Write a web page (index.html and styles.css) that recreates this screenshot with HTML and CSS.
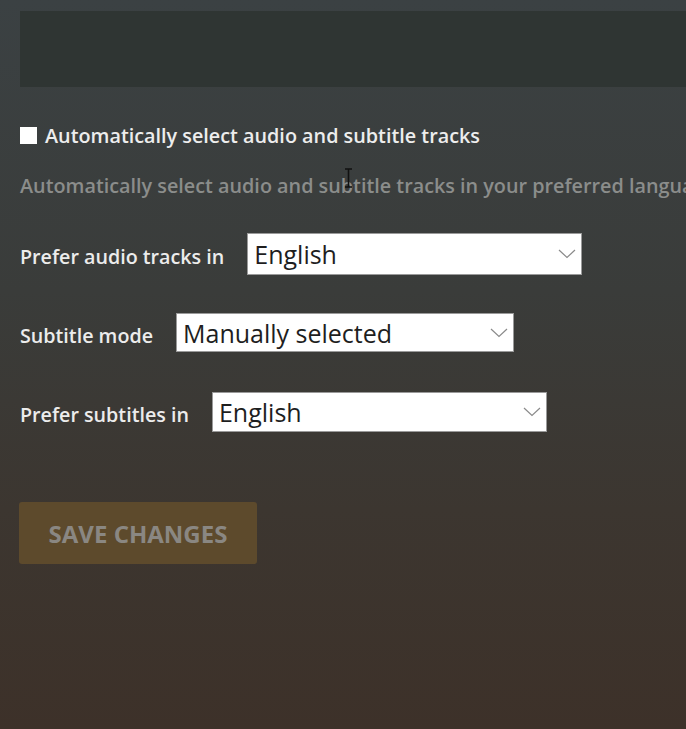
FILE: index.html
```html
<!DOCTYPE html>
<html lang="en">
	<head>
		<meta charset="utf-8">
		<meta name="viewport" content="width=device-width, initial-scale=1.0">
		<title>Playback settings</title>
		<link rel="stylesheet" href="styles.css">
	</head>
	<body>
		<div class="page">
			<div class="topField"></div>

			<label class="checkRow">
				<span class="checkBox"></span>
				<span class="checkText">Automatically select audio and subtitle tracks</span>
			</label>
			<p class="hint">Automatically select audio and subtitle tracks in your preferred language</p>

			<div class="fieldRow rowAudio">
				<span class="fieldLabel">Prefer audio tracks in</span>
				<div class="select">
					<span>English</span>
					<svg class="chev" width="18" height="10" viewBox="0 0 18 10"><path d="M1 1 L9 8.5 L17 1" fill="none" stroke="#8a8a8a" stroke-width="1.2"/></svg>
				</div>
			</div>

			<div class="fieldRow rowMode">
				<span class="fieldLabel">Subtitle mode</span>
				<div class="select">
					<span>Manually selected</span>
					<svg class="chev" width="18" height="10" viewBox="0 0 18 10"><path d="M1 1 L9 8.5 L17 1" fill="none" stroke="#8a8a8a" stroke-width="1.2"/></svg>
				</div>
			</div>

			<div class="fieldRow rowSubs">
				<span class="fieldLabel">Prefer subtitles in</span>
				<div class="select">
					<span>English</span>
					<svg class="chev" width="18" height="10" viewBox="0 0 18 10"><path d="M1 1 L9 8.5 L17 1" fill="none" stroke="#8a8a8a" stroke-width="1.2"/></svg>
				</div>
			</div>

			<button class="saveBtn" disabled>SAVE CHANGES</button>
		</div>
		<!-- text cursor -->
		<svg class="cursor" width="9" height="20" viewBox="0 0 9 20"><path d="M1 1 H8 M4.5 1 V19 M1 19 H8" fill="none" stroke="#111" stroke-width="1.6"/></svg>
	</body>
</html>
```

FILE: styles.css
```css
*{
	margin: 0;
	padding: 0;
	box-sizing: border-box;
}
html,
body{
	height: 100%;
}
body{
	position: relative;
	overflow: hidden;
	font-family: "Open Sans", "Noto Sans", sans-serif;
	background: linear-gradient(180deg, #3b4143 0%, #3a3c3a 40%, #3c3630 70%, #3d3129 100%);
}
.page{
	padding: 11px 0 0 20px;
}
/* dark box on top, runs off the right edge */
.topField{
	width: 720px;
	height: 76px;
	background: #2f3533;
}
.checkRow{
	display: flex;
	align-items: center;
	margin-top: 38px;
	height: 20px;
}
.checkBox{
	width: 17px;
	height: 17px;
	background: #fff;
	margin-right: 8px;
}
.checkText{
	font-size: 19.8px;
	font-weight: 600;
	color: #ededed;
	white-space: nowrap;
}
.hint{
	margin-top: 27px;
	white-space: nowrap;
	font-size: 19.8px;
	font-weight: 600;
	color: #8b8d8b;
}
.fieldRow{
	display: flex;
	align-items: center;
}
.fieldLabel{
	font-size: 19.7px;
	font-weight: 600;
	color: #ececec;
	margin-right: 23px;
	padding-top: 5px;
}
.select{
	display: flex;
	align-items: center;
	justify-content: space-between;
	width: 335px;
	background: #fff;
	border: 1px solid #9a9a9a;
	padding: 0 5px 0 6px;
	font-size: 25px;
	color: #1e1e1e;
}
.rowAudio{
	margin-top: 34px;
}
.rowAudio .select{
	height: 42px;
}
.rowMode{
	margin-top: 38px;
}
.rowMode .select{
	height: 39px;
	width: 338px;
}
.rowSubs{
	margin-top: 40px;
}
.rowSubs .select{
	height: 40px;
}
.saveBtn{
	display: block;
	margin: 70px 0 0 -1px;
	width: 238px;
	height: 62px;
	border: none;
	border-radius: 3px;
	background: #5d4a2c;
	color: #8a8782;
	font-family: "Open Sans", "Noto Sans", sans-serif;
	font-size: 24px;
	font-weight: 700;
}
.cursor{
	position: absolute;
	left: 344px;
	top: 168px;
}
```
